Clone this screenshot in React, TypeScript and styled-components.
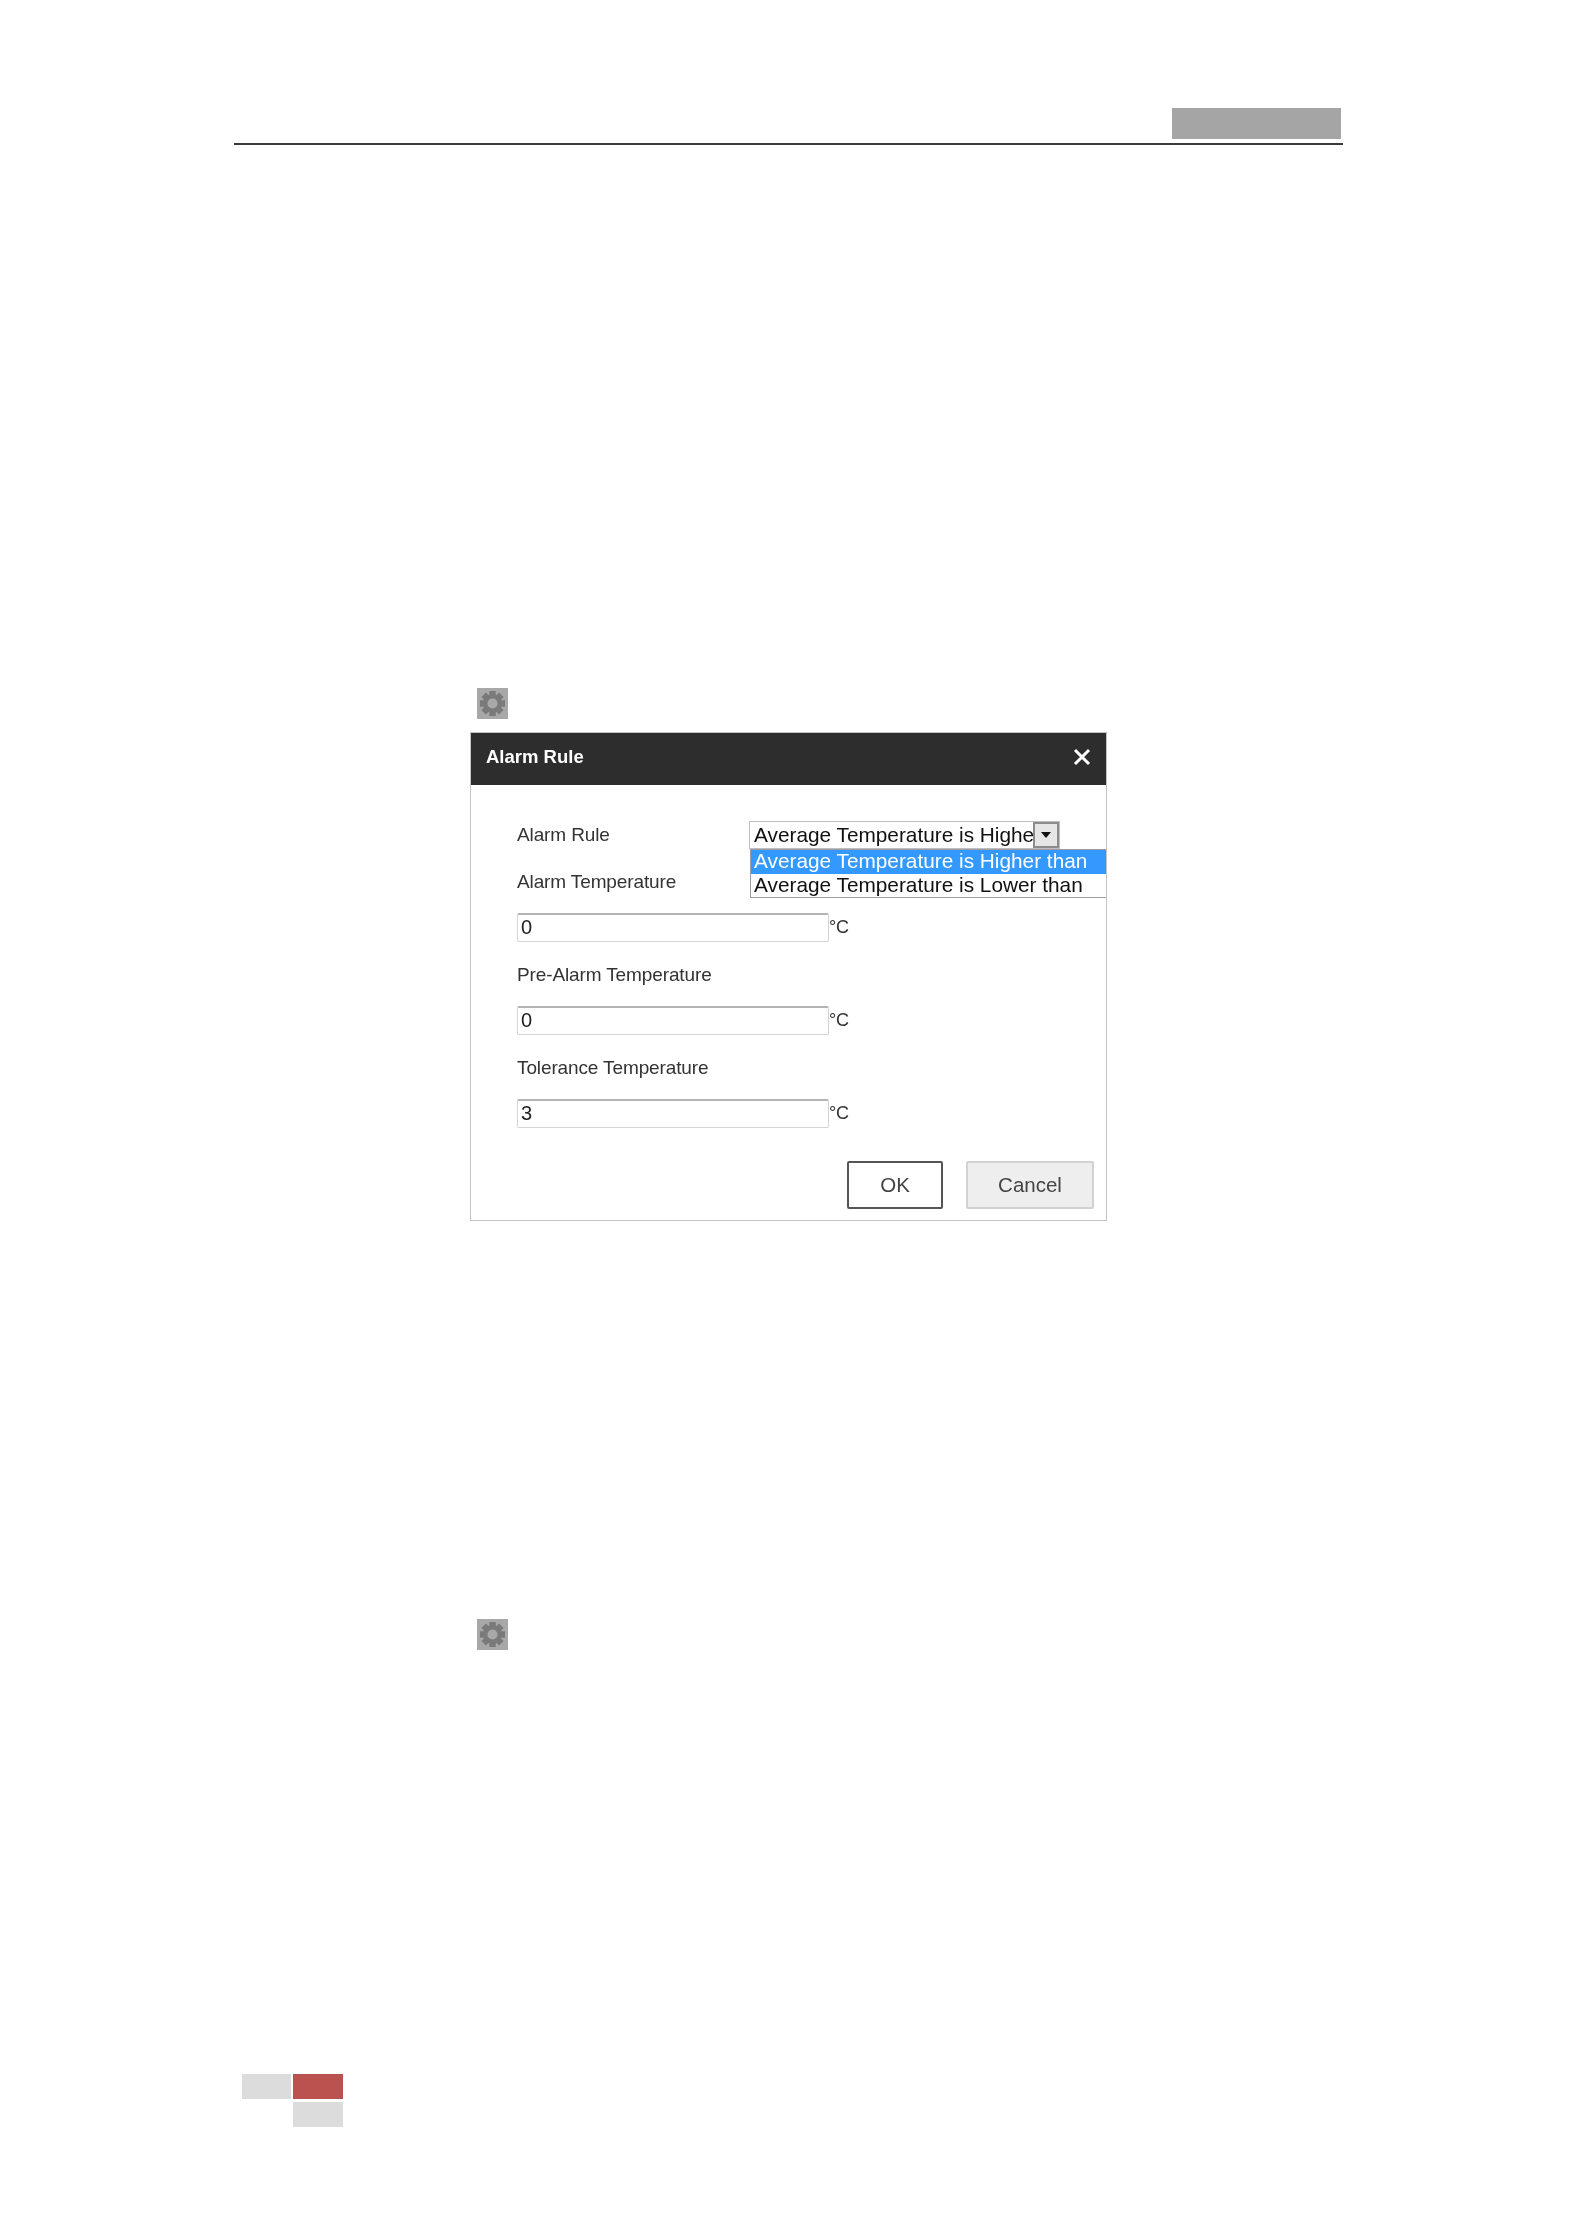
import React from 'react';
import styled, { createGlobalStyle } from 'styled-components';

const GlobalStyle = createGlobalStyle`
  html, body {
    margin: 0;
    padding: 0;
    background: #fff;
  }
  * {
    box-sizing: border-box;
  }
`;

function GearIcon() {
  const teeth = [0, 45, 90, 135, 180, 225, 270, 315];
  return (
    <GearBox>
      <svg width="31" height="31" viewBox="0 0 31 31">
        {teeth.map((deg) => (
          <rect key={deg} x="12.3" y="3" width="6.4" height="6" fill="#7a7a7a" transform={`rotate(${deg} 15.5 15.5)`} />
        ))}
        <circle cx="15.5" cy="15.5" r="7.3" fill="none" stroke="#7a7a7a" strokeWidth="4.4" />
      </svg>
    </GearBox>
  );
}

function TempField({ value }: { value: string }) {
  return (
    <FieldRow>
      <TextInput>{value}</TextInput>
      <Unit>°C</Unit>
    </FieldRow>
  );
}

export default function App() {
  return (
    <Page>
      <GlobalStyle />
      <HeaderBar>
        <HeaderTab />
      </HeaderBar>
      <Content>
        <FirstGear>
          <GearIcon />
        </FirstGear>
        <Dialog>
          <DialogTitle>
            <span>Alarm Rule</span>
            <svg width="18" height="18" viewBox="0 0 18 18">
              <path d="M2 2 L16 16 M16 2 L2 16" stroke="#fff" strokeWidth="3" />
            </svg>
          </DialogTitle>
          <DialogBody>
            <RuleRow>
              <RuleLabel>Alarm Rule</RuleLabel>
              <SelectBox>
                <SelectText>Average Temperature is Higher than</SelectText>
                <SelectArrow>
                  <svg width="10" height="6" viewBox="0 0 10 6">
                    <path d="M0 0 H10 L5 6 Z" fill="#111" />
                  </svg>
                </SelectArrow>
              </SelectBox>
              <OptionList>
                <Option $selected>Average Temperature is Higher than</Option>
                <Option>Average Temperature is Lower than</Option>
              </OptionList>
            </RuleRow>
            <Label>Alarm Temperature</Label>
            <TempField value="0" />
            <Label>Pre-Alarm Temperature</Label>
            <TempField value="0" />
            <Label>Tolerance Temperature</Label>
            <TempField value="3" />
            <Buttons>
              <PrimaryButton>OK</PrimaryButton>
              <CancelButton>Cancel</CancelButton>
            </Buttons>
          </DialogBody>
        </Dialog>
        <SecondGear>
          <GearIcon />
        </SecondGear>
      </Content>
      <FooterMark>
        <MarkCell />
        <MarkCell $red />
        <span />
        <MarkCell />
      </FooterMark>
    </Page>
  );
}

const Page = styled.div`
  width: 1578px;
  height: 2233px;
  padding: 108px 0 0 234px;
  overflow: hidden;
  background: #fff;
  font-family: "Liberation Sans", Arial, sans-serif;
`;

const HeaderBar = styled.div`
  width: 1109px;
  height: 37px;
  padding-right: 2px;
  display: flex;
  justify-content: flex-end;
  align-items: flex-start;
  border-bottom: 2px solid #3a3a3a;
`;

const HeaderTab = styled.div`
  width: 169px;
  height: 31px;
  background: #a5a5a5;
`;

const Content = styled.div`
  padding-left: 236px;
`;

const GearBox = styled.div`
  width: 31px;
  height: 31px;
  background: #a8a8a8;

  svg {
    display: block;
    filter: blur(0.7px);
  }
`;

const FirstGear = styled.div`
  margin: 543px 0 13px 7px;
`;

const SecondGear = styled.div`
  margin: 398px 0 0 7px;
`;

const Dialog = styled.div`
  width: 637px;
  height: 489px;
  border: 1px solid #c4c4c4;
  overflow: hidden;
  background: #fff;
  filter: blur(0.5px);
`;

const DialogTitle = styled.div`
  height: 53px;
  margin: -1px -1px 0;
  padding: 0 16px 3px;
  display: flex;
  align-items: center;
  justify-content: space-between;
  background: #2d2d2d;
  color: #fff;
  font-size: 18.5px;
  font-weight: bold;
`;

const DialogBody = styled.div`
  padding: 36px 12px 0 46px;
  color: #333;
  font-size: 19px;
  letter-spacing: -0.12px;
`;

const RuleRow = styled.div`
  position: relative;
  height: 28px;
  display: flex;
  align-items: center;
  justify-content: space-between;
  padding-right: 34px;
`;

const RuleLabel = styled.span``;

const SelectBox = styled.div`
  width: 311px;
  height: 28px;
  display: flex;
  align-items: center;
  justify-content: space-between;
  border: 1px solid #bdbdc2;
  background: #fff;
`;

const SelectText = styled.span`
  flex: 1;
  min-width: 0;
  padding-left: 4px;
  overflow: hidden;
  white-space: nowrap;
  color: #111;
  font-size: 20.8px;
  letter-spacing: 0;
`;

const SelectArrow = styled.span`
  width: 26px;
  height: 26px;
  display: flex;
  align-items: center;
  justify-content: center;
  border: 2px solid #8c8c8c;
  background: #e6e6e6;
`;

const OptionList = styled.div`
  position: absolute;
  top: 28px;
  left: 233px;
  width: 372px;
  border: 1px solid #9d9da3;
  background: #fff;
`;

const Option = styled.div<{ $selected?: boolean }>`
  height: 23.5px;
  padding-left: 3px;
  line-height: 21px;
  white-space: nowrap;
  font-size: 20.8px;
  letter-spacing: 0;
  color: ${(p) => (p.$selected ? '#fff' : '#111')};
  background: ${(p) => (p.$selected ? '#3399ff' : '#fff')};
`;

const Label = styled.div`
  height: 24px;
  margin: 21px 0 19px;
  line-height: 23px;
`;

const FieldRow = styled.div`
  height: 29px;
  display: flex;
  align-items: center;
`;

const TextInput = styled.div`
  width: 312px;
  height: 29px;
  padding-left: 3px;
  border: 1px solid #d4d4d8;
  border-top: 2px solid #b4b4b4;
  border-radius: 2px;
  line-height: 24px;
  font-size: 20px;
  color: #222;
`;

const Unit = styled.span`
  margin-left: 0;
  font-size: 18px;
`;

const Buttons = styled.div`
  margin-top: 33px;
  display: flex;
  justify-content: flex-end;
  gap: 23px;
`;

const PrimaryButton = styled.div`
  width: 96px;
  height: 48px;
  display: flex;
  align-items: center;
  justify-content: center;
  border: 2px solid #555;
  border-radius: 2px;
  background: #fff;
  color: #444;
  font-size: 20.5px;
  letter-spacing: 0;
`;

const CancelButton = styled(PrimaryButton)`
  width: 128px;
  border: 2px solid #d2d2d2;
  background: #eeeeee;
`;

const FooterMark = styled.div`
  margin: 424px 0 0 8px;
  display: grid;
  grid-template-columns: 49px 50px;
  grid-template-rows: 25px 25px;
  gap: 3px 2px;
`;

const MarkCell = styled.div<{ $red?: boolean }>`
  background: ${(p) => (p.$red ? '#bc524f' : '#dcdcdc')};
`;
